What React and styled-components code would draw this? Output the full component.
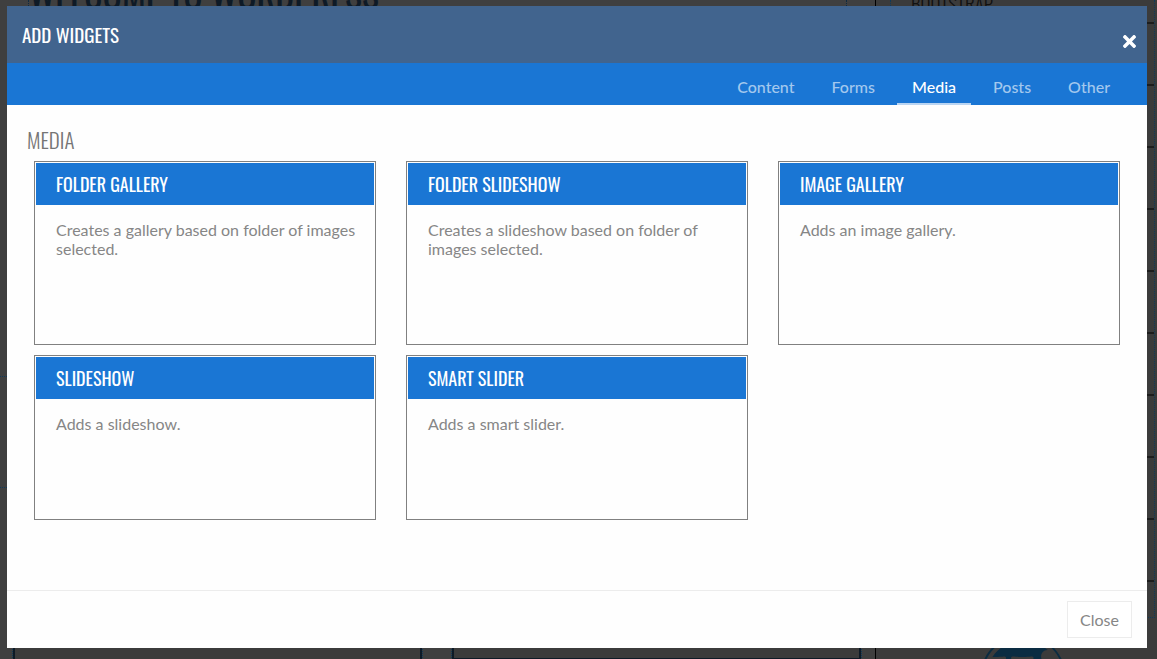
import React, { useState } from 'react'
import styled, { createGlobalStyle } from 'styled-components'
import { FaTimes, FaWordpress } from 'react-icons/fa'

const GlobalStyle = createGlobalStyle`
    * {
        box-sizing: border-box;
    }

    body {
        margin: 0;
        background-color: #3f3f3f;
        color: #868686;
        font-family: Lato, sans-serif;
        font-size: 16px;
        line-height: 19px;
    }
`;

/* page behind the dialog */

const Page = styled.div`
    display: flex;
    height: 100vh;
    overflow: hidden;
`;

const Main = styled.div`
    flex: 1;
    display: flex;
    flex-direction: column;
`;

const Hero = styled.div`
    flex: 0 0 376px;
    margin: 0 28px;
    border: 1px dotted #0f2a40;
    border-width: 0 1px;
`;

const PageTitle = styled.h1`
    margin: -32px 0 0;
    color: #0e1a26;
    font-family: Oswald, sans-serif;
    font-size: 36px;
    font-weight: 400;
    line-height: 50px;
    text-transform: uppercase;
`;

const Band = styled.div`
    flex: 0 0 112px;
    border: 1px dotted #0f3a5a;
    border-width: 1px 0;
`;

const Panels = styled.div`
    flex: 1;
    display: flex;
    gap: 30px;
    padding: 0 14px 0 13px;
`;

const Panel = styled.div`
    flex: 1;
    background-color: #3b3b3b;
    border: 2px solid #0e1a26;
    border-width: ${props => props.$closed ? '0 2px 1px' : '0 2px'};
    outline: 1px dotted #0f3a5a;
`;

const Side = styled.aside`
    flex: 0 0 282px;
    display: flex;
    flex-direction: column;
    background-color: #3b3b3b;
    border-left: 1px solid #000;
`;

const SideList = styled.ul`
    flex: 0 0 618px;
    margin: 0 2px 0 14px;
    padding: 0;
    list-style: none;
    border: 1px dotted #0f3a5a;
    border-top: 0;
`;

const SideItem = styled.li`
    height: 62px;
    padding-left: 20px;
    border-bottom: 2px solid #1d1d1d;
    color: #111;
    font-family: Oswald, sans-serif;
    font-size: 19px;
    font-weight: 300;
    line-height: 24px;
    text-transform: uppercase;

    &:first-child {
        height: 24px;
        line-height: 6px;
    }
`;

const Logo = styled(FaWordpress)`
    flex: none;
    align-self: center;
    width: 88px;
    height: 88px;
    margin: 15px 0 0 12px;
    color: #0b2c42;
`;

/* dialog */

const Overlay = styled.div`
    position: fixed;
    inset: 0;
    padding: 6px 10px 11px 7px;
`;

const Dialog = styled.section`
    display: flex;
    flex-direction: column;
    height: 100%;
    background-color: #fefefe;
`;

const Header = styled.header`
    display: flex;
    align-items: center;
    justify-content: space-between;
    padding: 14px 10px 12px 15px;
    background-color: #41648e;
`;

const Title = styled.h2`
    margin: 0;
    padding-bottom: 3px;
    color: #fff;
    font-family: Oswald, sans-serif;
    font-size: 19px;
    font-weight: 400;
    line-height: 28px;
    text-transform: uppercase;
`;

const IconButton = styled.button`
    display: flex;
    align-self: flex-end;
    padding: 0;
    border: 0;
    background: none;
    color: #fff;
    font-size: 19px;
    cursor: pointer;

    svg {
        width: 15px;
    }
`;

const Tabs = styled.nav`
    display: flex;
    justify-content: flex-end;
    gap: 7px;
    padding: 0 22px 0 21px;
    background-color: #1a76d4;
`;

const Tab = styled.button`
    height: 42px;
    padding: 7px 15px 0;
    border: 0;
    border-bottom: 2px solid ${props => props.$active ? '#bad5f2' : 'transparent'};
    background: none;
    color: ${props => props.$active ? '#fff' : '#a3c8ee'};
    font: inherit;
    font-weight: 500;
    cursor: pointer;
`;

const Body = styled.div`
    flex: 1;
    padding: 19px 27px;
    overflow: hidden;
`;

const Heading = styled.h3`
    margin: 0 -7px 5px;
    color: #757575;
    font-family: Oswald, sans-serif;
    font-size: 21px;
    font-weight: 300;
    line-height: 32px;
    text-transform: uppercase;
`;

const Cards = styled.div`
    display: grid;
    grid-template-columns: repeat(3, 1fr);
    gap: 10px 30px;
`;

const Card = styled.article`
    padding: 1px;
    border: 1px solid #808080;
    cursor: pointer;
`;

const CardTitle = styled.h4`
    margin: 0;
    padding: 7px 20px;
    background-color: #1a76d4;
    color: #fff;
    font-family: Oswald, sans-serif;
    font-size: 18px;
    font-weight: 400;
    line-height: 28px;
    text-transform: uppercase;
`;

const CardText = styled.p`
    margin: 0;
    padding: 15px 14px 85px 20px;
`;

const Footer = styled.footer`
    display: flex;
    justify-content: flex-end;
    padding: 10px 15px;
    border-top: 1px solid #ececec;
`;

const CloseButton = styled.button`
    height: 37px;
    padding: 0 12px;
    border: 1px solid #ececec;
    background-color: #fff;
    color: #868686;
    font: inherit;
    cursor: pointer;
`;

const tabs = ['Content', 'Forms', 'Media', 'Posts', 'Other']

const widgets = [
    { title: 'Folder Gallery', text: 'Creates a gallery based on folder of images selected.' },
    { title: 'Folder Slideshow', text: 'Creates a slideshow based on folder of images selected.' },
    { title: 'Image Gallery', text: 'Adds an image gallery.' },
    { title: 'Slideshow', text: 'Adds a slideshow.' },
    { title: 'Smart Slider', text: 'Adds a smart slider.' },
]

const Backdrop = () => {
    return (
        <Page aria-hidden="true">
            <Main>
                <Hero>
                    <PageTitle>Welcome to WordPress</PageTitle>
                </Hero>
                <Band />
                <Panels>
                    <Panel />
                    <Panel $closed />
                </Panels>
            </Main>
            <Side>
                <SideList>
                    <SideItem>Bootstrap</SideItem>
                    {Array.from({ length: 9 }, (_, i) => <SideItem key={i} />)}
                </SideList>
                <Logo />
            </Side>
        </Page>
    )
}

const App = () => {
    const [active, setActive] = useState('Media')

    return (
        <>
            <GlobalStyle />
            <Backdrop />
            <Overlay>
                <Dialog role="dialog" aria-labelledby="dialog-title">
                    <Header>
                        <Title id="dialog-title">Add Widgets</Title>
                        <IconButton type="button" aria-label="Close dialog">
                            <FaTimes />
                        </IconButton>
                    </Header>
                    <Tabs>
                        {tabs.map(tab => (
                            <Tab key={tab} type="button" $active={tab === active} onClick={() => setActive(tab)}>
                                {tab}
                            </Tab>
                        ))}
                    </Tabs>
                    <Body>
                        <Heading>{active}</Heading>
                        <Cards>
                            {widgets.map(widget => (
                                <Card key={widget.title}>
                                    <CardTitle>{widget.title}</CardTitle>
                                    <CardText>{widget.text}</CardText>
                                </Card>
                            ))}
                        </Cards>
                    </Body>
                    <Footer>
                        <CloseButton type="button">Close</CloseButton>
                    </Footer>
                </Dialog>
            </Overlay>
        </>
    )
}

export default App
